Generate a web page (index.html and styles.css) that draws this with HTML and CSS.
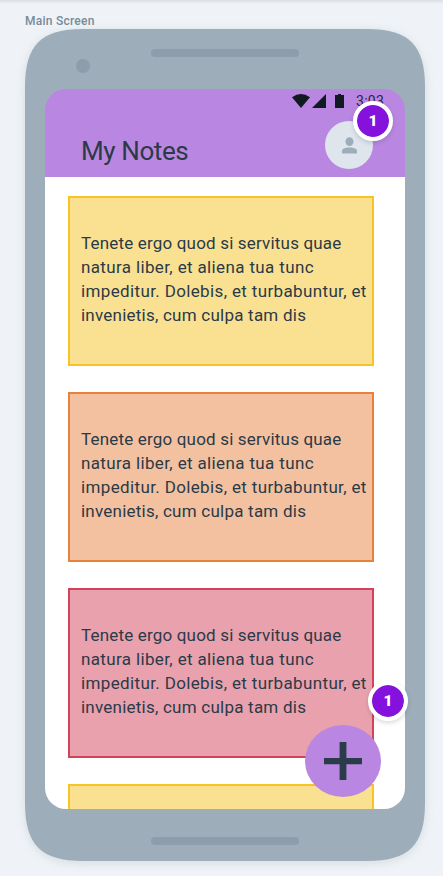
FILE: index.html
```html
<!DOCTYPE html>
<html lang="en">
<head>
<meta charset="utf-8">
<title>Main Screen</title>
<link rel="stylesheet" href="styles.css">
</head>
<body>
<div class="label">Main Screen</div>
<main class="phone">
  <svg class="shell" viewBox="0 0 400 832"><path fill="#9eadba" d="M0 58C0 16 16 0 58 0H342C384 0 400 16 400 58V774C400 816 384 832 342 832H58C16 832 0 816 0 774Z"/></svg>
  <div class="top"><span class="camera"></span><span class="slot"></span></div>
  <section class="screen">
    <header class="header">
      <div class="status">
        <svg class="wifi" viewBox="0 0 18 14"><path d="M0 3.2Q9-3.2 18 3.2L9 14Z"/></svg>
        <svg class="signal" viewBox="0 0 14 14"><path d="M14 0V14H0Z"/></svg>
        <svg class="battery" viewBox="0 0 9 14"><path d="M0 1H3V0H6V1H9V14H0Z"/></svg>
        <span class="time">3:03</span>
      </div>
      <div class="bar">
        <h1 class="title">My Notes</h1>
        <div class="avatar"><svg class="person" viewBox="0 0 15 17"><ellipse cx="7.5" cy="4.6" rx="4" ry="4.4"/><path d="M0 16.5V13.8C0 11.6 3.6 10.4 7.5 10.4S15 11.6 15 13.8V16.5Z"/></svg></div>
      </div>
    </header>
    <div class="notes">
      <article class="note yellow"><p class="text"><span class="l1">Tenete ergo quod si servitus quae</span><span class="l2">natura liber, et aliena tua tunc</span><span class="l3">impeditur. Dolebis, et turbabuntur, et</span><span class="l4">invenietis, cum culpa tam dis</span></p></article>
      <article class="note orange"><p class="text"><span class="l1">Tenete ergo quod si servitus quae</span><span class="l2">natura liber, et aliena tua tunc</span><span class="l3">impeditur. Dolebis, et turbabuntur, et</span><span class="l4">invenietis, cum culpa tam dis</span></p></article>
      <article class="note red"><p class="text"><span class="l1">Tenete ergo quod si servitus quae</span><span class="l2">natura liber, et aliena tua tunc</span><span class="l3">impeditur. Dolebis, et turbabuntur, et</span><span class="l4">invenietis, cum culpa tam dis</span></p></article>
      <article class="note yellow"></article>
    </div>
    <div class="fab"><svg class="plus" viewBox="0 0 38 38"><path d="M15.6 0H22.4V16H38V22.3H22.4V38H15.6V22.3H0V16H15.6Z"/></svg></div>
  </section>
  <span class="slot bottom"></span>
  <span class="badge badge-avatar">1</span>
  <span class="badge badge-fab">1</span>
</main>
</body>
</html>
```
FILE: styles.css
```css
* { box-sizing: border-box; }
body {
  margin: 0;
  height: 876px;
  overflow: hidden;
  background: linear-gradient(#dadfe3, #eff3f7 4px);
  font-family: Roboto, "Liberation Sans", sans-serif;
  color: #2b3a47;
}
.label {
  height: 29px;
  padding: 13px 0 0 25px;
  font-size: 12px;
  line-height: 16px;
  font-weight: 500;
  letter-spacing: 0.25px;
  color: #778b9b;
}
.phone {
  position: relative;
  width: 400px;
  height: 832px;
  margin-left: 25px;
  padding: 0 20px;
}
.shell {
  position: absolute;
  inset: 0;
  width: 400px;
  height: 832px;
  overflow: visible;
  filter: drop-shadow(0 2px 5px rgba(60, 80, 100, 0.14));
}
.top { position: relative; height: 60px; display: flex; }
.camera { width: 14px; height: 14px; margin: 30px 0 0 31px; border-radius: 50%; background: #8d9dac; }
.slot { display: block; width: 148px; height: 8px; border-radius: 4px; background: #8d9dac; margin: 20px 0 0 61px; }
.bottom { position: relative; margin: 28px 0 0 106px; }
.screen {
  position: relative;
  width: 360px;
  height: 720px;
  border-radius: 21px;
  overflow: hidden;
  background: linear-gradient(#b987e1 88px, #fff 88px);
}
.header { height: 88px; }
.status { display: flex; height: 24px; padding: 5px 0 0 247px; fill: #101a20; }
.wifi { width: 18px; height: 14px; }
.signal { width: 14px; height: 14px; margin-left: 2px; }
.battery { width: 9px; height: 14px; margin-left: 9px; }
.time { margin-left: 12px; font-size: 14px; line-height: 15px; font-weight: 400; letter-spacing: 0.3px; color: #2d243c; }
.bar { display: flex; justify-content: space-between; padding: 8px 32px 0 36px; }
.title { margin: 14px 0 0; font-size: 26px; line-height: 32px; font-weight: 400; letter-spacing: -0.4px; }
.avatar { display: flex; width: 48px; height: 48px; padding: 16px 0 0 17px; border-radius: 50%; background: #dfe5ed; }
.person { width: 15px; height: 17px; fill: #9eadba; }
.notes { display: flex; flex-direction: column; gap: 26px; padding: 19px 31px 0 23px; }
.note { height: 170px; flex: none; padding: 33px 0 0 11px; border: 2px solid; }
.yellow { background: #fae192; border-color: #f7c325; }
.orange { background: #f3c19f; border-color: #e8823a; }
.red { background: #e9a1ad; border-color: #d1435b; }
.text { margin: 0; font-size: 17px; line-height: 24px; }
.text span { display: block; white-space: nowrap; }
.l1 { letter-spacing: 0.18px; }
.l2 { letter-spacing: 0.36px; }
.l3 { letter-spacing: 0.36px; }
.l4 { letter-spacing: 0.23px; }
.fab { position: absolute; left: 260px; top: 636px; width: 76px; height: 72px; padding: 17px 0 0 19px; border-radius: 50%; background: #b987e1; }
.plus { display: block; width: 38px; height: 38px; fill: #2a3b49; }
.badge {
  position: absolute;
  width: 40px;
  height: 40px;
  border: 4px solid #fff;
  border-radius: 50%;
  background: #8512dc;
  background-clip: padding-box;
  color: #fff;
  font-size: 15.5px;
  line-height: 32px;
  font-weight: 900;
  text-align: center;
  box-shadow: 0 2px 4px rgba(40, 50, 70, 0.18);
}
.badge-avatar { left: 328px; top: 72px; }
.badge-fab { left: 343px; top: 652px; }
```
